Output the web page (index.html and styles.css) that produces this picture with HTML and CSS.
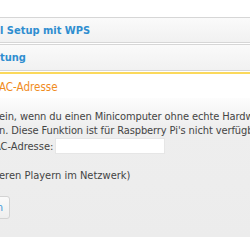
FILE: index.html
```html
<!DOCTYPE html>
<html lang="de">
<head>
    <meta charset="UTF-8">
    <title>Einstellungen</title>
    <link rel="stylesheet" href="styles.css">
</head>
<body>
    <div class="page">
        <div class="bar">l Setup mit WPS</div>
        <div class="bar bar-second">tung</div>
        <div class="section">
            <h2 class="section-title">AC-Adresse</h2>
        </div>
        <div class="panel">
            <p class="desc">ein, wenn du einen Minicomputer ohne echte Hardw<br>n. Diese Funktion ist für Raspberry Pi's nicht verfügba</p>
            <div class="field">
                <label for="macInput">AC-Adresse:</label>
                <input id="macInput" type="text">
            </div>
            <p class="hint">eren Playern im Netzwerk)</p>
            <button class="save">n</button>
        </div>
    </div>
</body>
</html>
```

FILE: styles.css
```css
body {
    margin: 0;
    padding: 0;
    background: #fff;
    overflow: hidden;
    font-family: "DejaVu Sans Condensed", "DejaVu Sans", sans-serif;
    font-size: 11px;
    color: #444;
}
.page {
    padding-top: 17px;
    margin-left: -1px;
}
.bar {
    height: 24px;
    line-height: 25px;
    padding-left: 1px;
    border-top: 1px solid #d6d6d6;
    border-bottom: 1px solid #d6d6d6;
    background: linear-gradient(#fafafa, #f1f1f1);
    color: #2f8ed0;
    font-weight: bold;
    margin-bottom: 1px;
}
.bar-second {
    height: 25px;
}
.section {
    margin-top: 1px;
    border-top: 2px solid #fbd95c;
    padding: 7px 0 0 0;
}
.section-title {
    margin: 0;
    font-size: 11.5px;
    font-weight: normal;
    color: #f08c1e;
    line-height: 12px;
}
.panel {
    margin-top: 5px;
    height: 139px;
    padding-top: 12px;
    box-sizing: border-box;
    background: linear-gradient(#fdfdfd, #eeeeee 30px, #ececec);
}
.desc {
    margin: 0;
    line-height: 14px;
    white-space: nowrap;
    letter-spacing: -0.1px;
}
.field {
    display: flex;
    align-items: center;
    gap: 4px;
    margin-top: 0;
}
.field label {
    margin-left: -5px;
}
.field input {
    width: 108px;
    height: 14px;
    border: 1px solid #e6e6e6;
    background: #fff;
    padding: 0;
    margin-left: -2px;
}
.hint {
    margin: 15px 0 0 0;
}
.save {
    display: block;
    margin: 14px 0 0 -20px;
    width: 31px;
    height: 23px;
    border: 1px solid #d3d3d3;
    border-radius: 3px;
    background: linear-gradient(#fafafa, #eeeeee);
    color: #3b97d8;
    font-family: inherit;
    font-size: 11px;
    text-align: right;
    padding: 0 6px 0 0;
}
```
